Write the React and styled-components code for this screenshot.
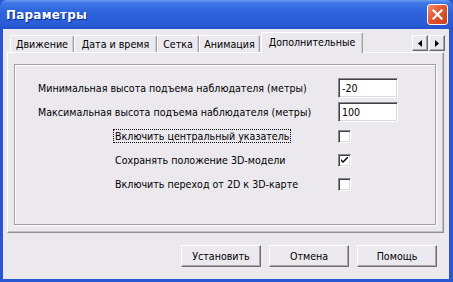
import styled, { createGlobalStyle } from "styled-components";

const GlobalStyle = createGlobalStyle`
  html, body {
    margin: 0;
    padding: 0;
    background: #ebe9ee;
  }
  * {
    box-sizing: border-box;
  }
`;

const Window = styled.div`
  width: 453px;
  height: 282px;
  display: flex;
  flex-direction: column;
  background: #2957d4;
  font-family: "DejaVu Sans Condensed", "DejaVu Sans", sans-serif;
  font-size: 10.6px;
  color: #000;
  overflow: hidden;
`;

const TitleBar = styled.div`
  height: 29px;
  flex: none;
  display: flex;
  align-items: center;
  justify-content: space-between;
  padding: 0 5px 0 6px;
  background: linear-gradient(
    to bottom,
    #6b9cf2 0%,
    #3f77e6 10%,
    #2c61da 45%,
    #2a5ed8 80%,
    #2453cc 100%
  );
  border-radius: 7px 7px 0 0;
`;

const Title = styled.span`
  font-family: "DejaVu Sans", sans-serif;
  font-weight: bold;
  font-size: 12px;
  color: #fff;
  text-shadow: 1px 1px #0c2a8a;
  letter-spacing: 0.2px;
`;

const CloseButton = styled.div`
  width: 21px;
  height: 21px;
  border: 1px solid #fff;
  border-radius: 3px;
  background: linear-gradient(135deg, #f1906a 0%, #e2572e 45%, #c8401c 100%);
  display: flex;
  align-items: center;
  justify-content: center;
`;

const Body = styled.div`
  flex: 1;
  margin: 0 4px 3px 3px;
  background: #ebe9ee;
  display: flex;
  flex-direction: column;
`;

const TabStrip = styled.div`
  height: 23px;
  flex: none;
  display: flex;
  align-items: flex-end;
  padding: 0 4px 0 7px;
  position: relative;
  z-index: 1;
`;

const Tab = styled.div`
  width: ${(p) => p.$w}px;
  height: ${(p) => (p.$active ? 21 : 17)}px;
  margin-left: ${(p) => (p.$active ? 1 : 0)}px;
  margin-bottom: ${(p) => (p.$active ? -1 : 0)}px;
  padding-bottom: ${(p) => (p.$active ? 2 : 0)}px;
  display: flex;
  align-items: center;
  justify-content: center;
  background: #ebe9ee;
  border-top: 1px solid #fff;
  border-left: 1px solid #fff;
  border-right: 1px solid #a0a0a0;
  box-shadow: inset -1px 0 #d0ced4;
  border-radius: 2px 2px 0 0;
  white-space: nowrap;
`;

const Arrows = styled.div`
  margin-left: auto;
  align-self: flex-start;
  margin-top: 6px;
  display: flex;
  gap: 1px;
`;

const ArrowButton = styled.div`
  width: 16px;
  height: 16px;
  display: flex;
  align-items: center;
  justify-content: center;
  background: #ebe9ee;
  border-top: 1px solid #fff;
  border-left: 1px solid #fff;
  border-right: 1px solid #6e6e6e;
  border-bottom: 1px solid #6e6e6e;
  box-shadow: inset -1px -1px #a8a8a8;
`;

const Panel = styled.div`
  height: 181px;
  margin: 0 5px 0 4px;
  padding: 11px 7px 7px 6px;
  border-top: 1px solid #fff;
  border-left: 1px solid #fff;
  border-right: 1px solid #8f8f8f;
  border-bottom: 1px solid #8f8f8f;
  box-shadow: inset -1px -1px #c4c2c8;
`;

const Group = styled.div`
  height: 100%;
  border: 1px solid #a0a0a0;
  box-shadow: inset 1px 1px #fff, 1px 1px #fff;
  padding: 13px 0 0 21px;
  display: flex;
  flex-direction: column;
  gap: 4px;
`;

const Row = styled.div`
  height: 20px;
  display: flex;
  align-items: center;
`;

const LabelCell = styled.div`
  width: 302px;
  padding-left: ${(p) => p.$indent || 0}px;
  display: flex;
  align-items: center;
  white-space: nowrap;
`;

const Label = styled.span`
  padding: 0 1px;
  border: 1px dotted ${(p) => (p.$focus ? "#000" : "transparent")};
  line-height: 12px;
`;

const TextField = styled.div`
  width: 60px;
  height: 20px;
  background: #fff;
  border-top: 1px solid #8a8a8a;
  border-left: 1px solid #8a8a8a;
  border-right: 1px solid #fff;
  border-bottom: 1px solid #fff;
  box-shadow: inset 1px 1px #404040, inset -1px -1px #dcdae0;
  padding: 0 3px;
  display: flex;
  align-items: center;
`;

const CheckBox = styled.div`
  width: 13px;
  height: 13px;
  background: #fff;
  border-top: 1px solid #8a8a8a;
  border-left: 1px solid #8a8a8a;
  border-right: 1px solid #fff;
  border-bottom: 1px solid #fff;
  box-shadow: inset 1px 1px #404040, inset -1px -1px #dcdae0;
  display: flex;
  align-items: center;
  justify-content: center;
`;

const Footer = styled.div`
  flex: 1;
  display: flex;
  justify-content: flex-end;
  align-items: flex-start;
  gap: 8px;
  padding: 12px 12px 0 0;
`;

const Button = styled.div`
  width: 80px;
  height: 22px;
  display: flex;
  align-items: center;
  justify-content: center;
  background: #ebe9ee;
  border-top: 1px solid #fff;
  border-left: 1px solid #fff;
  border-right: 1px solid #6e6e6e;
  border-bottom: 1px solid #6e6e6e;
  box-shadow: inset -1px -1px #a8a8a8;
`;

const tabs = [
  { label: "Движение", w: 64 },
  { label: "Дата и время", w: 83 },
  { label: "Сетка", w: 42 },
  { label: "Анимация", w: 61 },
  { label: "Дополнительные", w: 102, active: true },
];

const options = [
  { label: "Включить центральный указатель", checked: false, focus: true },
  { label: "Сохранять положение 3D-модели", checked: true },
  { label: "Включить переход от 2D к 3D-карте", checked: false },
];

function Check() {
  return (
    <svg width="7" height="7" viewBox="0 0 7 7">
      <path d="M0 2 L0 4 L2 6 L7 1 L7 -1 L2 4 Z" fill="#000" />
    </svg>
  );
}

export default function App() {
  return (
    <>
      <GlobalStyle />
      <Window>
        <TitleBar>
          <Title>Параметры</Title>
          <CloseButton>
            <svg width="11" height="11" viewBox="0 0 11 11">
              <path
                d="M1.5 1.5 L9.5 9.5 M9.5 1.5 L1.5 9.5"
                stroke="#fff"
                strokeWidth="2.2"
                strokeLinecap="square"
              />
            </svg>
          </CloseButton>
        </TitleBar>
        <Body>
          <TabStrip>
            {tabs.map((t) => (
              <Tab key={t.label} $w={t.w} $active={t.active}>
                {t.label}
              </Tab>
            ))}
            <Arrows>
              <ArrowButton>
                <svg width="4" height="7" viewBox="0 0 4 7">
                  <path d="M4 0 L4 7 L0 3.5 Z" fill="#000" />
                </svg>
              </ArrowButton>
              <ArrowButton>
                <svg width="4" height="7" viewBox="0 0 4 7">
                  <path d="M0 0 L0 7 L4 3.5 Z" fill="#000" />
                </svg>
              </ArrowButton>
            </Arrows>
          </TabStrip>
          <Panel>
            <Group>
              <Row>
                <LabelCell>
                  <Label>Минимальная высота подъема наблюдателя (метры)</Label>
                </LabelCell>
                <TextField>-20</TextField>
              </Row>
              <Row>
                <LabelCell>
                  <Label>Максимальная высота подъема наблюдателя (метры)</Label>
                </LabelCell>
                <TextField>100</TextField>
              </Row>
              {options.map((o) => (
                <Row key={o.label}>
                  <LabelCell $indent={77}>
                    <Label $focus={o.focus}>{o.label}</Label>
                  </LabelCell>
                  <CheckBox>{o.checked && <Check />}</CheckBox>
                </Row>
              ))}
            </Group>
          </Panel>
          <Footer>
            <Button>Установить</Button>
            <Button>Отмена</Button>
            <Button>Помощь</Button>
          </Footer>
        </Body>
      </Window>
    </>
  );
}
